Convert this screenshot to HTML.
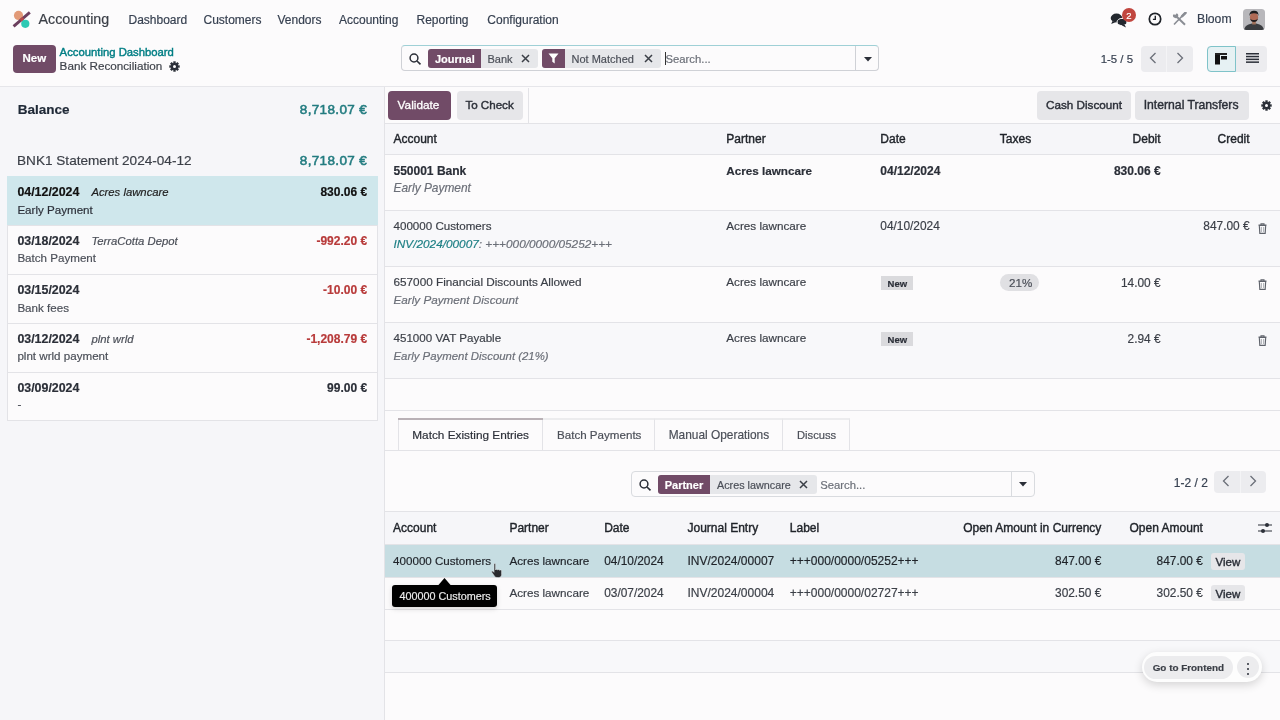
<!DOCTYPE html>
<html><head><meta charset="utf-8"><title>Bank Reconciliation</title>
<style>
html,body{margin:0;padding:0;width:1280px;height:720px;overflow:hidden;background:#fcfbfc;font-family:"Liberation Sans", sans-serif;}
.t{position:absolute;white-space:nowrap;font-family:"Liberation Sans", sans-serif;-webkit-text-stroke:0.18px currentColor;}
#w{position:absolute;left:0;top:0;width:1280px;height:720px;will-change:transform;}
.r{position:absolute;}
</style></head><body><div id="w">
<div class="r" style="left:0px;top:0px;width:1280px;height:87px;background:#fcfbfc;"></div>
<div class="r" style="left:0px;top:86px;width:1280px;height:1px;background:#e6e6ea;"></div>
<div class="r" style="left:0px;top:87px;width:384px;height:633px;background:#f6f6f9;"></div>
<div class="r" style="left:384px;top:87px;width:1px;height:633px;background:#e3e3e7;"></div>
<div class="r" style="left:385px;top:87px;width:895px;height:633px;background:#fcfbfc;"></div>
<svg class="r" style="left:12px;top:10px" width="20" height="20" viewBox="0 0 20 20">
<circle cx="6.5" cy="5.4" r="4.6" fill="#e29a78"/>
<circle cx="13.3" cy="13.85" r="4.1" fill="#2ec9b4"/>
<line x1="1.6" y1="16.4" x2="17.8" y2="2.3" stroke="#6b3f5e" stroke-width="2.9"/>
<line x1="8.5" y1="10.4" x2="11.3" y2="8" stroke="#b84848" stroke-width="2.9"/>
</svg>
<div class="t" style="left:38.5px;top:9px;font-size:14.3px;line-height:20px;font-weight:normal;font-style:normal;color:#3b3f47;">Accounting</div>
<div class="t" style="left:128.5px;top:10px;font-size:12px;line-height:20px;font-weight:normal;font-style:normal;color:#374151;">Dashboard</div>
<div class="t" style="left:203.5px;top:10px;font-size:12px;line-height:20px;font-weight:normal;font-style:normal;color:#374151;">Customers</div>
<div class="t" style="left:277.5px;top:10px;font-size:12px;line-height:20px;font-weight:normal;font-style:normal;color:#374151;">Vendors</div>
<div class="t" style="left:339.0px;top:10px;font-size:12px;line-height:20px;font-weight:normal;font-style:normal;color:#374151;">Accounting</div>
<div class="t" style="left:416.5px;top:10px;font-size:12px;line-height:20px;font-weight:normal;font-style:normal;color:#374151;">Reporting</div>
<div class="t" style="left:487.3px;top:10px;font-size:12px;line-height:20px;font-weight:normal;font-style:normal;color:#374151;">Configuration</div>
<svg class="r" style="left:1110px;top:12px" width="20" height="16" viewBox="0 0 20 16">
<ellipse cx="6.5" cy="6" rx="5.8" ry="4.4" fill="#23272e"/>
<path d="M2.5 9 L1.2 12 L6 10 Z" fill="#23272e"/>
<ellipse cx="12" cy="10" rx="5" ry="3.6" fill="#23272e" stroke="#fcfbfc" stroke-width="1"/>
<path d="M14.5 12.5 L16 15.5 L11.5 13.3 Z" fill="#23272e"/>
</svg>
<div class="r" style="left:1121.5px;top:7.8px;width:14.5px;height:14.5px;border-radius:50%;background:#c1463f;"></div>
<div class="t" style="left:1126.2px;top:6px;font-size:9.5px;line-height:20px;font-weight:normal;font-style:normal;color:#ffffff;">2</div>
<svg class="r" style="left:1148px;top:11.8px" width="14" height="14" viewBox="0 0 14 14">
<circle cx="7" cy="7" r="5.7" fill="none" stroke="#1f2329" stroke-width="1.7"/>
<path d="M7.3 3.8 V7.4 H4.9" fill="none" stroke="#1f2329" stroke-width="1.4"/>
</svg>
<svg class="r" style="left:1172px;top:12px" width="15" height="14" viewBox="0 0 15 14">
<path d="M4 4 L13 12.8" stroke="#8a8d94" stroke-width="2"/>
<path d="M1.2 2.5 A2.6 2.6 0 1 0 4.8 1.2 L3.2 3 L2.6 2.6 Z" fill="#8a8d94"/>
<path d="M12.8 1.2 L2 12.5" stroke="#8a8d94" stroke-width="1.6"/>
<path d="M13.5 0.8 L10.2 4.2" stroke="#8a8d94" stroke-width="2.6" stroke-linecap="round"/>
</svg>
<div class="t" style="left:1197.0px;top:9px;font-size:12.2px;line-height:20px;font-weight:normal;font-style:normal;color:#374151;">Bloom</div>
<svg class="r" style="left:1243px;top:8.5px;border-radius:3.5px" width="22" height="21.5" viewBox="0 0 22 21.5">
<rect width="22" height="21.5" fill="#b8b7bb"/>
<path d="M1 21.5 C1.5 17 5 14.5 11 14.5 C17 14.5 20.5 17 21 21.5 Z" fill="#3a3c40"/>
<rect x="9.2" y="11.5" width="3.6" height="4" fill="#a0705a"/>
<ellipse cx="11" cy="8.3" rx="4.1" ry="5" fill="#b06a55"/>
<path d="M6.6 7 C6.3 2.8 8.5 1.8 11 1.8 C13.8 1.8 15.7 3 15.4 7 L14.6 5 C12.5 4 9.5 4 7.4 5 Z" fill="#1c1c1e"/>
<path d="M7.2 9.5 C7.5 14.3 14.5 14.3 14.8 9.5 C13.5 11.5 8.5 11.5 7.2 9.5 Z" fill="#232022"/>
</svg>
<div class="r" style="left:13px;top:45px;width:43px;height:28px;background:#714b67;border-radius:4px;"></div>
<div class="t" style="left:22.5px;top:48px;font-size:11.5px;line-height:20px;font-weight:bold;font-style:normal;color:#ffffff;">New</div>
<div class="t" style="left:59.6px;top:42px;font-size:11.3px;line-height:20px;font-weight:normal;font-style:normal;color:#017e84;-webkit-text-stroke:0.4px currentColor;">Accounting Dashboard</div>
<div class="t" style="left:59.6px;top:56px;font-size:11.7px;line-height:20px;font-weight:normal;font-style:normal;color:#3f434b;">Bank Reconciliation</div>
<svg class="r" style="left:169px;top:60.5px" width="11" height="11" viewBox="0 0 11 11"><g fill="#2b2f38"><circle cx="5.5" cy="5.5" r="3.6"/><rect x="4.3" y="0.3" width="2.4" height="10.4"/><rect x="0.3" y="4.3" width="10.4" height="2.4"/><rect x="4.3" y="0.3" width="2.4" height="10.4" transform="rotate(45 5.5 5.5)"/><rect x="4.3" y="0.3" width="2.4" height="10.4" transform="rotate(-45 5.5 5.5)"/></g><circle cx="5.5" cy="5.5" r="1.5" fill="#fcfbfc"/></svg>
<div class="r" style="left:401px;top:45px;width:478px;height:26px;background:#fcfbfc;box-sizing:border-box;border:1px solid #cfd1d6;border-top-color:#9fd0d6;border-radius:4px;"></div>
<div class="r" style="left:855px;top:46px;width:1px;height:24px;background:#cfd1d6;"></div>
<svg class="r" style="left:409px;top:52.5px" width="13" height="12" viewBox="0 0 13 12"><circle cx="5" cy="5" r="3.9" fill="none" stroke="#2b2f38" stroke-width="1.5"/><path d="M8 8 L11.5 11.3" stroke="#2b2f38" stroke-width="1.6"/></svg>
<div class="r" style="left:428px;top:49px;width:110px;height:19px;background:#e6e7ea;border-radius:3px;"></div>
<div class="r" style="left:428px;top:49px;width:53px;height:19px;background:#714b67;border-radius:3px 0 0 3px;"></div>
<div class="t" style="left:435.0px;top:49px;font-size:11px;line-height:20px;font-weight:bold;font-style:normal;color:#ffffff;">Journal</div>
<div class="t" style="left:487.5px;top:49px;font-size:11px;line-height:20px;font-weight:normal;font-style:normal;color:#4b4f58;">Bank</div>
<svg class="r" style="left:520.5px;top:53.5px" width="9" height="9" viewBox="0 0 9 9"><path d="M1 1 L8 8 M8 1 L1 8" stroke="#3b3f47" stroke-width="1.5"/></svg>
<div class="r" style="left:541.5px;top:49px;width:119.5px;height:19px;background:#e6e7ea;border-radius:3px;"></div>
<div class="r" style="left:541.5px;top:49px;width:23px;height:19px;background:#714b67;border-radius:3px 0 0 3px;"></div>
<svg class="r" style="left:547.5px;top:53px" width="11" height="11" viewBox="0 0 11 11"><path d="M0.5 0.5 H10.5 L6.7 5.2 V10.5 L4.3 8.8 V5.2 Z" fill="#ffffff"/></svg>
<div class="t" style="left:571.5px;top:49px;font-size:11px;line-height:20px;font-weight:normal;font-style:normal;color:#4b4f58;">Not Matched</div>
<svg class="r" style="left:644px;top:53.5px" width="9" height="9" viewBox="0 0 9 9"><path d="M1 1 L8 8 M8 1 L1 8" stroke="#3b3f47" stroke-width="1.5"/></svg>
<div class="r" style="left:665px;top:52px;width:1px;height:13px;background:#333;"></div>
<div class="t" style="left:665.5px;top:49px;font-size:11.3px;line-height:20px;font-weight:normal;font-style:normal;color:#6b6f78;">Search...</div>
<svg class="r" style="left:863.5px;top:56.5px" width="8" height="5" viewBox="0 0 8 5"><path d="M0 0 H8 L4 4.5 Z" fill="#2b2f38"/></svg>
<div class="t" style="left:1100.7px;top:49px;font-size:11.4px;line-height:20px;font-weight:normal;font-style:normal;color:#374151;">1-5 / 5</div>
<div class="r" style="left:1140.5px;top:45.5px;width:52px;height:26px;background:#ececef;border-radius:4px;"></div>
<div class="r" style="left:1166px;top:45.5px;width:1px;height:26px;background:#f4f4f6;"></div>
<svg class="r" style="left:1149px;top:52px" width="8" height="12" viewBox="0 0 8 12"><path d="M6.5 1 L1.5 6 L6.5 11" fill="none" stroke="#6b6f78" stroke-width="1.3"/></svg>
<svg class="r" style="left:1176px;top:52px" width="8" height="12" viewBox="0 0 8 12"><path d="M1.5 1 L6.5 6 L1.5 11" fill="none" stroke="#6b6f78" stroke-width="1.3"/></svg>
<div class="r" style="left:1206.5px;top:45.5px;width:60px;height:26px;background:#ececef;border-radius:4px;"></div>
<div class="r" style="left:1206.5px;top:45.5px;width:29.5px;height:26px;background:#e6f1f3;box-sizing:border-box;border:1px solid #7fc3c9;border-radius:4px 0 0 4px;"></div>
<svg class="r" style="left:1215px;top:52.5px" width="13" height="12" viewBox="0 0 13 12"><rect x="0" y="0" width="12" height="2" fill="#222"/><rect x="0" y="2" width="5" height="9.5" fill="#111"/><rect x="6" y="3" width="6" height="3.5" fill="#111"/></svg>
<svg class="r" style="left:1245.5px;top:53px" width="13" height="10" viewBox="0 0 13 10"><g fill="#2b2f38"><rect y="0" width="13" height="1.5"/><rect y="2.8" width="13" height="1.5"/><rect y="5.6" width="13" height="1.5"/><rect y="8.4" width="13" height="1.5"/></g></svg>
<div class="t" style="left:17.7px;top:100px;font-size:13.5px;line-height:20px;font-weight:bold;font-style:normal;color:#1f2937;">Balance</div>
<div class="t" style="right:912.9px;top:100px;font-size:13.5px;line-height:20px;font-weight:normal;font-style:normal;color:#237c80;letter-spacing:0.35px;-webkit-text-stroke:0.55px currentColor;">8,718.07 €</div>
<div class="t" style="left:17.0px;top:151px;font-size:13.6px;line-height:20px;font-weight:normal;font-style:normal;color:#3b3f47;">BNK1 Statement 2024-04-12</div>
<div class="t" style="right:912.9px;top:151px;font-size:13.5px;line-height:20px;font-weight:normal;font-style:normal;color:#237c80;letter-spacing:0.35px;-webkit-text-stroke:0.55px currentColor;">8,718.07 €</div>
<div class="r" style="left:7px;top:176px;width:371px;height:245px;background:#fcfbfc;box-sizing:border-box;border:1px solid #e3e3e7;"></div>
<div class="r" style="left:7px;top:176px;width:371px;height:49px;background:#cfe7ec;"></div>
<div class="t" style="left:17.4px;top:182px;font-size:12.4px;line-height:20px;font-weight:bold;font-style:normal;color:#111111;">04/12/2024</div>
<div class="t" style="left:91.4px;top:182px;font-size:11.3px;line-height:20px;font-weight:normal;font-style:italic;color:#222;">Acres lawncare</div>
<div class="t" style="right:912.9px;top:182px;font-size:12px;line-height:20px;font-weight:bold;font-style:normal;color:#111111;">830.06 €</div>
<div class="t" style="left:17.4px;top:200px;font-size:11.6px;line-height:20px;font-weight:normal;font-style:normal;color:#2b2f38;">Early Payment</div>
<div class="r" style="left:7px;top:225px;width:371px;height:1px;background:#e3e3e7;"></div>
<div class="t" style="left:17.4px;top:231px;font-size:12.4px;line-height:20px;font-weight:bold;font-style:normal;color:#2b2f38;">03/18/2024</div>
<div class="t" style="left:91.4px;top:231px;font-size:11.3px;line-height:20px;font-weight:normal;font-style:italic;color:#4b4f58;">TerraCotta Depot</div>
<div class="t" style="right:912.9px;top:231px;font-size:12px;line-height:20px;font-weight:bold;font-style:normal;color:#b83a3a;">-992.20 €</div>
<div class="t" style="left:17.4px;top:248px;font-size:11.6px;line-height:20px;font-weight:normal;font-style:normal;color:#4b4f58;">Batch Payment</div>
<div class="r" style="left:7px;top:274px;width:371px;height:1px;background:#e3e3e7;"></div>
<div class="t" style="left:17.4px;top:280px;font-size:12.4px;line-height:20px;font-weight:bold;font-style:normal;color:#2b2f38;">03/15/2024</div>
<div class="t" style="right:912.9px;top:280px;font-size:12px;line-height:20px;font-weight:bold;font-style:normal;color:#b83a3a;">-10.00 €</div>
<div class="t" style="left:17.4px;top:298px;font-size:11.6px;line-height:20px;font-weight:normal;font-style:normal;color:#4b4f58;">Bank fees</div>
<div class="r" style="left:7px;top:323px;width:371px;height:1px;background:#e3e3e7;"></div>
<div class="t" style="left:17.4px;top:329px;font-size:12.4px;line-height:20px;font-weight:bold;font-style:normal;color:#2b2f38;">03/12/2024</div>
<div class="t" style="left:91.4px;top:329px;font-size:11.3px;line-height:20px;font-weight:normal;font-style:italic;color:#4b4f58;">plnt wrld</div>
<div class="t" style="right:912.9px;top:329px;font-size:12px;line-height:20px;font-weight:bold;font-style:normal;color:#b83a3a;">-1,208.79 €</div>
<div class="t" style="left:17.4px;top:346px;font-size:11.6px;line-height:20px;font-weight:normal;font-style:normal;color:#4b4f58;">plnt wrld payment</div>
<div class="r" style="left:7px;top:372px;width:371px;height:1px;background:#e3e3e7;"></div>
<div class="t" style="left:17.4px;top:378px;font-size:12.4px;line-height:20px;font-weight:bold;font-style:normal;color:#2b2f38;">03/09/2024</div>
<div class="t" style="right:912.9px;top:378px;font-size:12px;line-height:20px;font-weight:bold;font-style:normal;color:#2b2f38;">99.00 €</div>
<div class="t" style="left:17.4px;top:394px;font-size:11.6px;line-height:20px;font-weight:normal;font-style:normal;color:#4b4f58;">-</div>
<div class="r" style="left:388px;top:91px;width:63px;height:29px;background:#714b67;border-radius:4px;"></div>
<div class="t" style="left:397.6px;top:95px;font-size:11.8px;line-height:20px;font-weight:normal;font-style:normal;color:#ffffff;-webkit-text-stroke:0.3px #fff;">Validate</div>
<div class="r" style="left:456.5px;top:91px;width:66px;height:29px;background:#e6e6e9;border-radius:4px;"></div>
<div class="t" style="left:465.4px;top:95px;font-size:11.6px;line-height:20px;font-weight:normal;font-style:normal;color:#2b2f38;-webkit-text-stroke:0.4px currentColor;">To Check</div>
<div class="r" style="left:528px;top:88px;width:1px;height:35px;background:#e3e3e7;"></div>
<div class="r" style="left:1037px;top:91px;width:94px;height:29px;background:#e6e6e9;border-radius:4px;"></div>
<div class="t" style="left:1046.0px;top:95px;font-size:11.7px;line-height:20px;font-weight:normal;font-style:normal;color:#2b2f38;-webkit-text-stroke:0.4px currentColor;">Cash Discount</div>
<div class="r" style="left:1135px;top:91px;width:114px;height:29px;background:#e6e6e9;border-radius:4px;"></div>
<div class="t" style="left:1143.7px;top:95px;font-size:12.2px;line-height:20px;font-weight:normal;font-style:normal;color:#2b2f38;-webkit-text-stroke:0.4px currentColor;">Internal Transfers</div>
<svg class="r" style="left:1260.5px;top:100px" width="11" height="11" viewBox="0 0 11 11"><g fill="#2b2f38"><circle cx="5.5" cy="5.5" r="3.6"/><rect x="4.3" y="0.3" width="2.4" height="10.4"/><rect x="0.3" y="4.3" width="10.4" height="2.4"/><rect x="4.3" y="0.3" width="2.4" height="10.4" transform="rotate(45 5.5 5.5)"/><rect x="4.3" y="0.3" width="2.4" height="10.4" transform="rotate(-45 5.5 5.5)"/></g><circle cx="5.5" cy="5.5" r="1.5" fill="#fcfbfc"/></svg>
<div class="r" style="left:385px;top:123px;width:895px;height:32px;background:#f6f6f9;"></div>
<div class="r" style="left:385px;top:123px;width:895px;height:1px;background:#e3e3e7;"></div>
<div class="r" style="left:385px;top:154px;width:895px;height:1px;background:#e3e3e7;"></div>
<div class="t" style="left:393.5px;top:129px;font-size:12px;line-height:20px;font-weight:normal;font-style:normal;color:#1f2329;-webkit-text-stroke:0.4px currentColor;">Account</div>
<div class="t" style="left:726.3px;top:129px;font-size:12px;line-height:20px;font-weight:normal;font-style:normal;color:#1f2329;-webkit-text-stroke:0.4px currentColor;">Partner</div>
<div class="t" style="left:880.3px;top:129px;font-size:12px;line-height:20px;font-weight:normal;font-style:normal;color:#1f2329;-webkit-text-stroke:0.4px currentColor;">Date</div>
<div class="t" style="left:999.8px;top:129px;font-size:12px;line-height:20px;font-weight:normal;font-style:normal;color:#1f2329;-webkit-text-stroke:0.4px currentColor;">Taxes</div>
<div class="t" style="right:119.4px;top:129px;font-size:12px;line-height:20px;font-weight:normal;font-style:normal;color:#1f2329;-webkit-text-stroke:0.4px currentColor;">Debit</div>
<div class="t" style="right:30.4px;top:129px;font-size:12px;line-height:20px;font-weight:normal;font-style:normal;color:#1f2329;-webkit-text-stroke:0.4px currentColor;">Credit</div>
<div class="r" style="left:385px;top:155px;width:895px;height:55px;background:#fcfbfc;"></div>
<div class="r" style="left:385px;top:210px;width:895px;height:1px;background:#e3e3e7;"></div>
<div class="r" style="left:385px;top:211px;width:895px;height:55px;background:#f8f8fa;"></div>
<div class="r" style="left:385px;top:266px;width:895px;height:1px;background:#e3e3e7;"></div>
<div class="r" style="left:385px;top:267px;width:895px;height:55px;background:#fcfbfc;"></div>
<div class="r" style="left:385px;top:322px;width:895px;height:1px;background:#e3e3e7;"></div>
<div class="r" style="left:385px;top:323px;width:895px;height:55px;background:#f8f8fa;"></div>
<div class="r" style="left:385px;top:378px;width:895px;height:1px;background:#e3e3e7;"></div>
<div class="t" style="left:393.5px;top:161px;font-size:12px;line-height:20px;font-weight:bold;font-style:normal;color:#2b2f38;">550001 Bank</div>
<div class="t" style="left:393.5px;top:178px;font-size:11.9px;line-height:20px;font-weight:normal;font-style:italic;color:#6b6f78;">Early Payment</div>
<div class="t" style="left:726.3px;top:161px;font-size:11.7px;line-height:20px;font-weight:bold;font-style:normal;color:#2b2f38;">Acres lawncare</div>
<div class="t" style="left:880.3px;top:161px;font-size:12px;line-height:20px;font-weight:bold;font-style:normal;color:#2b2f38;">04/12/2024</div>
<div class="t" style="right:119.4px;top:161px;font-size:12px;line-height:20px;font-weight:bold;font-style:normal;color:#2b2f38;">830.06 €</div>
<div class="t" style="left:393.5px;top:216px;font-size:11.6px;line-height:20px;font-weight:normal;font-style:normal;color:#3b3f47;">400000 Customers</div>
<div class="t" style="left:393.5px;top:234px;font-size:11.8px;line-height:20px;font-weight:normal;font-style:italic;color:#6b6f78;"><span style="color:#1d7f84">INV/2024/00007</span>: +++000/0000/05252+++</div>
<div class="t" style="left:726.3px;top:216px;font-size:11.7px;line-height:20px;font-weight:normal;font-style:normal;color:#3b3f47;">Acres lawncare</div>
<div class="t" style="left:880.3px;top:216px;font-size:11.9px;line-height:20px;font-weight:normal;font-style:normal;color:#3b3f47;">04/10/2024</div>
<div class="t" style="right:30.4px;top:216px;font-size:11.9px;line-height:20px;font-weight:normal;font-style:normal;color:#3b3f47;">847.00 €</div>
<svg class="r" style="left:1257.5px;top:223px" width="9" height="11" viewBox="0 0 9 11"><path d="M0.5 2 H8.5 M3 2 V0.8 H6 V2" fill="none" stroke="#5f636b" stroke-width="1.1"/><path d="M1.3 2.5 H7.7 L7.2 10.4 H1.8 Z" fill="none" stroke="#5f636b" stroke-width="1.1"/><path d="M3.3 4 V9 M5.7 4 V9" stroke="#8f939b" stroke-width="0.8"/></svg>
<div class="t" style="left:393.5px;top:272px;font-size:11.75px;line-height:20px;font-weight:normal;font-style:normal;color:#3b3f47;">657000 Financial Discounts Allowed</div>
<div class="t" style="left:393.5px;top:290px;font-size:11.7px;line-height:20px;font-weight:normal;font-style:italic;color:#6b6f78;">Early Payment Discount</div>
<div class="t" style="left:726.3px;top:272px;font-size:11.7px;line-height:20px;font-weight:normal;font-style:normal;color:#3b3f47;">Acres lawncare</div>
<div class="r" style="left:881px;top:276px;width:32px;height:14px;background:#dadadd;"></div>
<div class="t" style="left:887.6px;top:274px;font-size:9.5px;line-height:20px;font-weight:bold;font-style:normal;color:#2b2f38;">New</div>
<div class="r" style="left:1000px;top:274px;width:38.5px;height:16.5px;background:#e0e0e3;border-radius:9px;"></div>
<div class="t" style="left:1009.0px;top:273px;font-size:11.6px;line-height:20px;font-weight:normal;font-style:normal;color:#4b4f58;">21%</div>
<div class="t" style="right:119.4px;top:273px;font-size:11.9px;line-height:20px;font-weight:normal;font-style:normal;color:#3b3f47;">14.00 €</div>
<svg class="r" style="left:1257.5px;top:279.3px" width="9" height="11" viewBox="0 0 9 11"><path d="M0.5 2 H8.5 M3 2 V0.8 H6 V2" fill="none" stroke="#5f636b" stroke-width="1.1"/><path d="M1.3 2.5 H7.7 L7.2 10.4 H1.8 Z" fill="none" stroke="#5f636b" stroke-width="1.1"/><path d="M3.3 4 V9 M5.7 4 V9" stroke="#8f939b" stroke-width="0.8"/></svg>
<div class="t" style="left:393.5px;top:328px;font-size:11.6px;line-height:20px;font-weight:normal;font-style:normal;color:#3b3f47;">451000 VAT Payable</div>
<div class="t" style="left:393.5px;top:346px;font-size:11.4px;line-height:20px;font-weight:normal;font-style:italic;color:#6b6f78;">Early Payment Discount (21%)</div>
<div class="t" style="left:726.3px;top:328px;font-size:11.7px;line-height:20px;font-weight:normal;font-style:normal;color:#3b3f47;">Acres lawncare</div>
<div class="r" style="left:881px;top:332px;width:32px;height:14px;background:#dadadd;"></div>
<div class="t" style="left:887.6px;top:330px;font-size:9.5px;line-height:20px;font-weight:bold;font-style:normal;color:#2b2f38;">New</div>
<div class="t" style="right:119.4px;top:329px;font-size:11.9px;line-height:20px;font-weight:normal;font-style:normal;color:#3b3f47;">2.94 €</div>
<svg class="r" style="left:1257.5px;top:335.3px" width="9" height="11" viewBox="0 0 9 11"><path d="M0.5 2 H8.5 M3 2 V0.8 H6 V2" fill="none" stroke="#5f636b" stroke-width="1.1"/><path d="M1.3 2.5 H7.7 L7.2 10.4 H1.8 Z" fill="none" stroke="#5f636b" stroke-width="1.1"/><path d="M3.3 4 V9 M5.7 4 V9" stroke="#8f939b" stroke-width="0.8"/></svg>
<div class="r" style="left:385px;top:410px;width:895px;height:1px;background:#e3e3e7;"></div>
<div class="r" style="left:398px;top:418px;width:145px;height:33px;background:#fcfbfc;box-sizing:border-box;border:1px solid #e3e3e7;border-bottom:none;"></div>
<div class="r" style="left:398px;top:418px;width:145px;height:2px;background:#b9b1b6;"></div>
<div class="r" style="left:543px;top:418px;width:112px;height:32px;background:transparent;box-sizing:border-box;border-top:2px solid #ececee;border-right:1px solid #e3e3e7;"></div>
<div class="r" style="left:655px;top:418px;width:128px;height:32px;background:transparent;box-sizing:border-box;border-top:2px solid #ececee;border-right:1px solid #e3e3e7;"></div>
<div class="r" style="left:783px;top:418px;width:67px;height:32px;background:transparent;box-sizing:border-box;border-top:2px solid #ececee;border-right:1px solid #e3e3e7;"></div>
<div class="t" style="left:412.3px;top:425px;font-size:11.8px;line-height:20px;font-weight:normal;font-style:normal;color:#2b2f38;">Match Existing Entries</div>
<div class="t" style="left:557.0px;top:425px;font-size:11.6px;line-height:20px;font-weight:normal;font-style:normal;color:#4b4f58;">Batch Payments</div>
<div class="t" style="left:668.7px;top:425px;font-size:11.9px;line-height:20px;font-weight:normal;font-style:normal;color:#4b4f58;">Manual Operations</div>
<div class="t" style="left:797.0px;top:425px;font-size:11.2px;line-height:20px;font-weight:normal;font-style:normal;color:#4b4f58;">Discuss</div>
<div class="r" style="left:385px;top:450px;width:895px;height:1px;background:#e3e3e7;"></div>
<div class="r" style="left:631px;top:471px;width:404px;height:26px;background:#fcfbfc;box-sizing:border-box;border:1px solid #d9dbdf;border-radius:4px;"></div>
<div class="r" style="left:1010.5px;top:472px;width:1px;height:24px;background:#d9dbdf;"></div>
<svg class="r" style="left:638.5px;top:478.5px" width="13" height="12" viewBox="0 0 13 12"><circle cx="5" cy="5" r="3.9" fill="none" stroke="#2b2f38" stroke-width="1.5"/><path d="M8 8 L11.5 11.3" stroke="#2b2f38" stroke-width="1.6"/></svg>
<div class="r" style="left:657.5px;top:475px;width:159px;height:19px;background:#e6e7ea;border-radius:3px;"></div>
<div class="r" style="left:657.5px;top:475px;width:52.5px;height:19px;background:#714b67;border-radius:3px 0 0 3px;"></div>
<div class="t" style="left:664.7px;top:475px;font-size:11px;line-height:20px;font-weight:bold;font-style:normal;color:#ffffff;">Partner</div>
<div class="t" style="left:717.0px;top:475px;font-size:10.8px;line-height:20px;font-weight:normal;font-style:normal;color:#4b4f58;">Acres lawncare</div>
<svg class="r" style="left:799px;top:479.5px" width="9" height="9" viewBox="0 0 9 9"><path d="M1 1 L8 8 M8 1 L1 8" stroke="#3b3f47" stroke-width="1.5"/></svg>
<div class="t" style="left:820.2px;top:475px;font-size:11.3px;line-height:20px;font-weight:normal;font-style:normal;color:#6b6f78;">Search...</div>
<svg class="r" style="left:1018.5px;top:482px" width="8" height="5" viewBox="0 0 8 5"><path d="M0 0 H8 L4 4.5 Z" fill="#2b2f38"/></svg>
<div class="t" style="left:1173.8px;top:473px;font-size:12px;line-height:20px;font-weight:normal;font-style:normal;color:#374151;">1-2 / 2</div>
<div class="r" style="left:1213.5px;top:470.5px;width:52.5px;height:22px;background:#ececef;border-radius:4px;"></div>
<div class="r" style="left:1240px;top:470.5px;width:1px;height:22px;background:#f4f4f6;"></div>
<svg class="r" style="left:1222px;top:475px" width="8" height="12" viewBox="0 0 8 12"><path d="M6.5 1 L1.5 6 L6.5 11" fill="none" stroke="#6b6f78" stroke-width="1.3"/></svg>
<svg class="r" style="left:1249px;top:475px" width="8" height="12" viewBox="0 0 8 12"><path d="M1.5 1 L6.5 6 L1.5 11" fill="none" stroke="#6b6f78" stroke-width="1.3"/></svg>
<div class="r" style="left:385px;top:511px;width:895px;height:34px;background:#f6f6f9;"></div>
<div class="r" style="left:385px;top:511px;width:895px;height:1px;background:#e3e3e7;"></div>
<div class="r" style="left:385px;top:544px;width:895px;height:1px;background:#e3e3e7;"></div>
<div class="t" style="left:393.1px;top:518px;font-size:12px;line-height:20px;font-weight:normal;font-style:normal;color:#1f2329;-webkit-text-stroke:0.4px currentColor;">Account</div>
<div class="t" style="left:509.4px;top:518px;font-size:12px;line-height:20px;font-weight:normal;font-style:normal;color:#1f2329;-webkit-text-stroke:0.4px currentColor;">Partner</div>
<div class="t" style="left:604.2px;top:518px;font-size:12px;line-height:20px;font-weight:normal;font-style:normal;color:#1f2329;-webkit-text-stroke:0.4px currentColor;">Date</div>
<div class="t" style="left:687.5px;top:518px;font-size:12px;line-height:20px;font-weight:normal;font-style:normal;color:#1f2329;-webkit-text-stroke:0.4px currentColor;">Journal Entry</div>
<div class="t" style="left:789.8px;top:518px;font-size:12px;line-height:20px;font-weight:normal;font-style:normal;color:#1f2329;-webkit-text-stroke:0.4px currentColor;">Label</div>
<div class="t" style="right:178.7px;top:518px;font-size:12px;line-height:20px;font-weight:normal;font-style:normal;color:#1f2329;-webkit-text-stroke:0.4px currentColor;">Open Amount in Currency</div>
<div class="t" style="right:77.1px;top:518px;font-size:12px;line-height:20px;font-weight:normal;font-style:normal;color:#1f2329;-webkit-text-stroke:0.4px currentColor;">Open Amount</div>
<svg class="r" style="left:1257.5px;top:521.5px" width="14" height="12" viewBox="0 0 14 12"><g stroke="#2b2f38" stroke-width="1.2"><path d="M0 3 H14 M0 9 H14"/></g><circle cx="9" cy="3" r="2" fill="#2b2f38"/><circle cx="5" cy="9" r="2" fill="#2b2f38"/></svg>
<div class="r" style="left:385px;top:545px;width:895px;height:32px;background:#c6dde2;"></div>
<div class="r" style="left:385px;top:578px;width:895px;height:31px;background:#fbfafb;"></div>
<div class="r" style="left:385px;top:641px;width:895px;height:31px;background:#f8f8fa;"></div>
<div class="r" style="left:385px;top:577px;width:895px;height:1px;background:#e3e3e7;"></div>
<div class="r" style="left:385px;top:609px;width:895px;height:1px;background:#e3e3e7;"></div>
<div class="r" style="left:385px;top:640px;width:895px;height:1px;background:#e3e3e7;"></div>
<div class="r" style="left:385px;top:672px;width:895px;height:1px;background:#e3e3e7;"></div>
<div class="t" style="left:393.1px;top:551px;font-size:11.6px;line-height:20px;font-weight:normal;font-style:normal;color:#1f2329;">400000 Customers</div>
<div class="t" style="left:509.4px;top:551px;font-size:11.7px;line-height:20px;font-weight:normal;font-style:normal;color:#1f2329;">Acres lawncare</div>
<div class="t" style="left:604.2px;top:551px;font-size:11.9px;line-height:20px;font-weight:normal;font-style:normal;color:#1f2329;">04/10/2024</div>
<div class="t" style="left:687.5px;top:551px;font-size:12px;line-height:20px;font-weight:normal;font-style:normal;color:#1f2329;">INV/2024/00007</div>
<div class="t" style="left:789.8px;top:551px;font-size:12px;line-height:20px;font-weight:normal;font-style:normal;color:#1f2329;">+++000/0000/05252+++</div>
<div class="t" style="right:178.7px;top:551px;font-size:11.9px;line-height:20px;font-weight:normal;font-style:normal;color:#1f2329;">847.00 €</div>
<div class="t" style="right:77.1px;top:551px;font-size:11.9px;line-height:20px;font-weight:normal;font-style:normal;color:#1f2329;">847.00 €</div>
<div class="r" style="left:1211px;top:553.1px;width:34px;height:16.5px;background:#e6e6e9;border-radius:3px;"></div>
<div class="t" style="left:1215.5px;top:552px;font-size:11.5px;line-height:20px;font-weight:normal;font-style:normal;color:#2b2f38;-webkit-text-stroke:0.4px currentColor;">View</div>
<div class="t" style="left:509.4px;top:583px;font-size:11.7px;line-height:20px;font-weight:normal;font-style:normal;color:#3b3f47;">Acres lawncare</div>
<div class="t" style="left:604.2px;top:583px;font-size:11.9px;line-height:20px;font-weight:normal;font-style:normal;color:#3b3f47;">03/07/2024</div>
<div class="t" style="left:687.5px;top:583px;font-size:12px;line-height:20px;font-weight:normal;font-style:normal;color:#3b3f47;">INV/2024/00004</div>
<div class="t" style="left:789.8px;top:583px;font-size:12px;line-height:20px;font-weight:normal;font-style:normal;color:#3b3f47;">+++000/0000/02727+++</div>
<div class="t" style="right:178.7px;top:583px;font-size:11.9px;line-height:20px;font-weight:normal;font-style:normal;color:#3b3f47;">302.50 €</div>
<div class="t" style="right:77.1px;top:583px;font-size:11.9px;line-height:20px;font-weight:normal;font-style:normal;color:#3b3f47;">302.50 €</div>
<div class="r" style="left:1211px;top:584.9000000000001px;width:34px;height:16.5px;background:#e6e6e9;border-radius:3px;"></div>
<div class="t" style="left:1215.5px;top:584px;font-size:11.5px;line-height:20px;font-weight:normal;font-style:normal;color:#2b2f38;-webkit-text-stroke:0.4px currentColor;">View</div>
<div class="r" style="left:392px;top:585px;width:105px;height:22px;background:#000;border-radius:3px;box-shadow:0 2px 5px rgba(0,0,0,0.15);"></div>
<svg class="r" style="left:438px;top:578px" width="13" height="7.5" viewBox="0 0 13 7.5"><path d="M0 7.5 L6.5 0 L13 7.5 Z" fill="#000"/></svg>
<div class="t" style="left:399.5px;top:586px;font-size:10.8px;line-height:20px;font-weight:normal;font-style:normal;color:#ececec;">400000 Customers</div>
<svg class="r" style="left:490.5px;top:563px" width="12" height="15" viewBox="0 0 12 15">
<path d="M3 1 C3 0.3 4.6 0.3 4.6 1 V7 C5 6 6.5 6 6.6 7 C7 6.2 8.5 6.3 8.6 7.3 C9 6.6 10.6 6.8 10.6 7.8 V11.5 C10.6 13.5 9.5 14.5 7.5 14.5 H6 C4.5 14.5 3.8 13.8 3 12.5 L0.8 9.3 C0.3 8.5 1.3 7.6 2 8.3 L3 9.3 Z" fill="#2a2a2e" stroke="#dfe6e8" stroke-width="0.6"/>
</svg>
<div class="r" style="left:1141.5px;top:652px;width:120px;height:30px;border-radius:15px;background:#fdfdfd;box-shadow:0 3px 10px rgba(0,0,0,0.16);"></div>
<div class="r" style="left:1143.5px;top:655.5px;width:89px;height:23px;background:#ececee;border-radius:12px;"></div>
<div class="t" style="left:1152.7px;top:658px;font-size:9.9px;line-height:20px;font-weight:bold;font-style:normal;color:#3b3f47;">Go to Frontend</div>
<div class="r" style="left:1237px;top:656px;width:22px;height:22px;background:#ececee;border-radius:50%;"></div>
<div class="r" style="left:1246.8px;top:662.5px;width:2.4px;height:2.4px;background:#2b2f38;border-radius:50%;"></div>
<div class="r" style="left:1246.8px;top:667.5px;width:2.4px;height:2.4px;background:#2b2f38;border-radius:50%;"></div>
<div class="r" style="left:1246.8px;top:672.5px;width:2.4px;height:2.4px;background:#2b2f38;border-radius:50%;"></div>
</div></body></html>
